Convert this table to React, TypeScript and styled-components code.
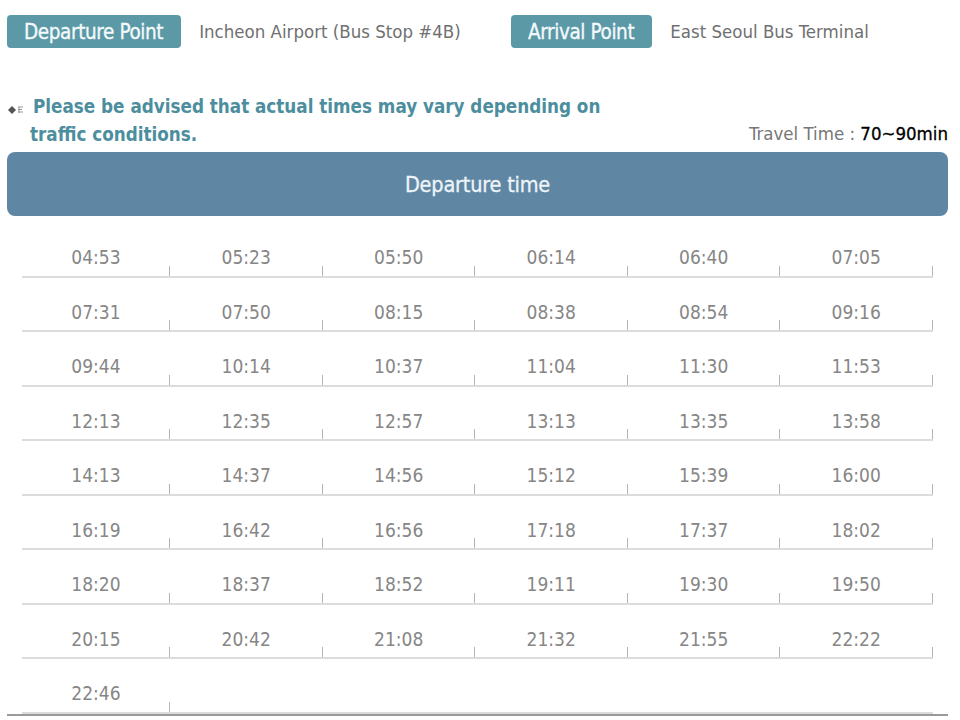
import styled, { createGlobalStyle } from 'styled-components'

const times = [
  '04:53', '05:23', '05:50', '06:14', '06:40', '07:05',
  '07:31', '07:50', '08:15', '08:38', '08:54', '09:16',
  '09:44', '10:14', '10:37', '11:04', '11:30', '11:53',
  '12:13', '12:35', '12:57', '13:13', '13:35', '13:58',
  '14:13', '14:37', '14:56', '15:12', '15:39', '16:00',
  '16:19', '16:42', '16:56', '17:18', '17:37', '18:02',
  '18:20', '18:37', '18:52', '19:11', '19:30', '19:50',
  '20:15', '20:42', '21:08', '21:32', '21:55', '22:22',
  '22:46',
]

const GlobalStyle = createGlobalStyle`
  body {
    margin: 0;
    background: #fff;
    font-family: "DejaVu Sans", sans-serif;
  }
`

const Page = styled.div`
  width: 960px;
  height: 720px;
  overflow: hidden;
  padding: 15px 12px 0 7px;
  box-sizing: border-box;
`
const PointRow = styled.div`
  display: flex;
  align-items: center;
  height: 33px;
`
const PointGroup = styled.div<{ $width?: number }>`
  display: flex;
  align-items: center;
  gap: 18px;
  width: ${p => (p.$width ? `${p.$width}px` : 'auto')};
`
const Badge = styled.div`
  height: 33px;
  padding: 0 18px 0 17px;
  display: flex;
  align-items: center;
  background: #5b99a7;
  border-radius: 4px;
  color: #f4fafb;
  font-family: "DejaVu Sans Condensed", sans-serif;
  font-size: 20.5px;
  letter-spacing: -0.4px;
  -webkit-text-stroke: 0.3px #f4fafb;
`
const PlaceName = styled.span`
  color: #707070;
  font-family: "DejaVu Sans Condensed", sans-serif;
  font-size: 18.5px;
`
const InfoRow = styled.div`
  display: flex;
  justify-content: space-between;
  align-items: flex-end;
  margin-top: 45px;
`
const Notice = styled.p`
  margin: 0;
  padding-left: 23px;
  text-indent: -23px;
  color: #4c8e9e;
  font-family: "DejaVu Sans Condensed", sans-serif;
  font-weight: bold;
  font-size: 18.7px;
  line-height: 28px;
`
const NoticeIcon = styled.svg`
  width: 20px;
  height: 10px;
  margin-right: 6px;
  vertical-align: -2px;
`
const TravelTime = styled.div`
  margin-bottom: 5px;
  color: #777;
  font-family: "DejaVu Sans Condensed", sans-serif;
  font-size: 18.5px;
`
const TravelValue = styled.span`
  color: #000;
  -webkit-text-stroke: 0.3px #000;
`
const HeaderBar = styled.div`
  margin-top: 3px;
  height: 64px;
  display: flex;
  align-items: center;
  justify-content: center;
  background: #5f87a4;
  border-radius: 8px;
  color: #eef4f8;
  font-family: "DejaVu Sans Condensed", sans-serif;
  font-size: 21.5px;
  letter-spacing: -0.2px;
  -webkit-text-stroke: 0.3px #eef4f8;
`
const TimeGrid = styled.div`
  display: grid;
  grid-template-columns: 148px repeat(5, 152.5px);
  grid-auto-rows: 54.5px;
  margin: 7px 0 0 15px;
  width: 911px;
`
const Cell = styled.div<{ $tick: boolean }>`
  position: relative;
  box-sizing: border-box;
  padding-top: 23px;
  border-bottom: 2px solid #dcdcdc;
  text-align: center;
  color: #868686;
  font-family: "DejaVu Sans Condensed", sans-serif;
  font-size: 19px;
  line-height: 22px;

  &::after {
    content: '';
    display: ${p => (p.$tick ? 'block' : 'none')};
    position: absolute;
    right: 0;
    bottom: 0;
    width: 1px;
    height: 10px;
    background: #b5b5b5;
  }
`
const BottomRule = styled.div`
  height: 2px;
  background: #9a9a9a;
`

export default function App() {
  const cells = [...times, ...Array(54 - times.length).fill('')]

  return (
    <>
      <GlobalStyle />
      <Page>
        <PointRow>
          <PointGroup $width={504}>
            <Badge>Departure Point</Badge>
            <PlaceName>Incheon Airport (Bus Stop #4B)</PlaceName>
          </PointGroup>
          <PointGroup>
            <Badge>Arrival Point</Badge>
            <PlaceName>East Seoul Bus Terminal</PlaceName>
          </PointGroup>
        </PointRow>

        <InfoRow>
          <Notice>
            <NoticeIcon viewBox="0 0 20 10">
              <path d="M5 1 L9 5 L5 9 L1 5 Z" fill="#555" />
              <path d="M11 2 H16 M11 4.5 H15 M11 7 H16 M12 2 V8" stroke="#999" strokeWidth="1" />
            </NoticeIcon>
            Please be advised that actual times may vary depending on
            <br />
            traffic conditions.
          </Notice>
          <TravelTime>
            Travel Time : <TravelValue>70~90min</TravelValue>
          </TravelTime>
        </InfoRow>

        <HeaderBar>Departure time</HeaderBar>

        <TimeGrid>
          {cells.map((t, i) => (
            <Cell key={i} $tick={t !== ''}>{t}</Cell>
          ))}
        </TimeGrid>
        <BottomRule />
      </Page>
    </>
  )
}
